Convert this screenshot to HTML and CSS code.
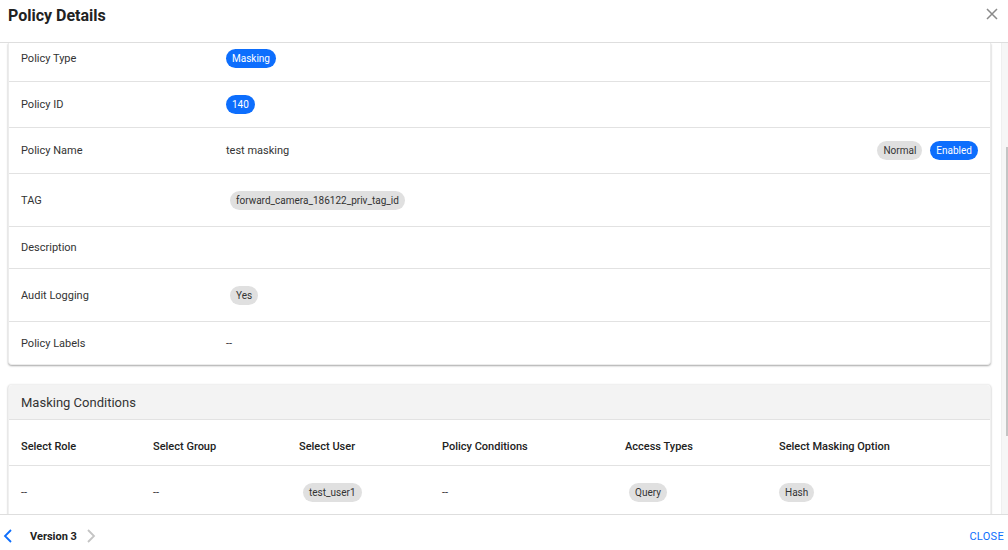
FILE: index.html
```html
<!DOCTYPE html>
<html lang="en">
<head>
    <meta charset="UTF-8">
    <meta name="viewport" content="width=device-width, initial-scale=1.0">
    <title>Policy Details</title>
    <link rel="stylesheet" href="styles.css">
</head>
<body>

    <div class="modal">

        <!-- Header -->
        <div class="modal-header">
            <h1>Policy Details</h1>
            <button class="close-x" aria-label="Close">
                <svg width="12" height="12" viewBox="0 0 12 12">
                    <path d="M1 1 L11 11 M11 1 L1 11" stroke="#8a8a8a" stroke-width="1.5" fill="none"/>
                </svg>
            </button>
        </div>

        <!-- Body (scrolled down to the policy rows) -->
        <div class="modal-main">
            <div class="modal-body">

                <div class="card scrolled">
                    <div class="detail-row first-row">
                        <div class="label">Policy Type</div>
                        <div class="value"><span class="chip blue">Masking</span></div>
                    </div>
                    <div class="detail-row chip-row">
                        <div class="label">Policy ID</div>
                        <div class="value"><span class="chip blue">140</span></div>
                    </div>
                    <div class="detail-row chip-row">
                        <div class="label">Policy Name</div>
                        <div class="value">test masking</div>
                        <div class="extra">
                            <span class="chip gray">Normal</span>
                            <span class="chip blue">Enabled</span>
                        </div>
                    </div>
                    <div class="detail-row tag-row">
                        <div class="label">TAG</div>
                        <div class="value"><span class="chip gray spaced">forward_camera_186122_priv_tag_id</span></div>
                    </div>
                    <div class="detail-row">
                        <div class="label">Description</div>
                        <div class="value"></div>
                    </div>
                    <div class="detail-row tag-row">
                        <div class="label">Audit Logging</div>
                        <div class="value"><span class="chip gray spaced">Yes</span></div>
                    </div>
                    <div class="detail-row last">
                        <div class="label">Policy Labels</div>
                        <div class="value">--</div>
                    </div>
                </div>

                <div class="card conditions">
                    <div class="card-title">Masking Conditions</div>
                    <div class="cond-grid cond-head">
                        <div>Select Role</div>
                        <div>Select Group</div>
                        <div>Select User</div>
                        <div>Policy Conditions</div>
                        <div>Access Types</div>
                        <div>Select Masking Option</div>
                    </div>
                    <div class="cond-grid cond-row">
                        <div>--</div>
                        <div>--</div>
                        <div><span class="chip gray spaced">test_user1</span></div>
                        <div>--</div>
                        <div><span class="chip gray spaced">Query</span></div>
                        <div><span class="chip gray">Hash</span></div>
                    </div>
                </div>

            </div>

            <!-- scrollbar rail -->
            <div class="scroll-rail">
                <div class="scroll-thumb"></div>
            </div>
        </div>

        <!-- Footer -->
        <div class="modal-footer">
            <div class="versions">
                <svg class="chev" width="10" height="14" viewBox="0 0 10 14">
                    <path d="M8 1 L2 7 L8 13" stroke="#0d6efd" stroke-width="1.8" fill="none"/>
                </svg>
                <span class="version-label">Version 3</span>
                <svg class="chev" width="10" height="14" viewBox="0 0 10 14">
                    <path d="M2 1 L8 7 L2 13" stroke="#c4c4c4" stroke-width="1.8" fill="none"/>
                </svg>
            </div>
            <button class="close-btn">Close</button>
        </div>

    </div>

</body>
</html>
```

FILE: styles.css
```css
* {
    margin: 0;
    padding: 0;
    box-sizing: border-box;
}

body {
    font-family: Roboto, 'Liberation Sans', sans-serif;
    background-color: #fff;
    color: #333;
    width: 1008px;
    height: 550px;
    overflow: hidden;
}

.modal {
    display: flex;
    flex-direction: column;
    height: 550px;
}

/* Header */
.modal-header {
    display: flex;
    justify-content: space-between;
    align-items: center;
    height: 43px;
    padding: 0 8px;
    border-bottom: 1px solid #dedede;
    flex-shrink: 0;
}

.modal-header h1 {
    font-size: 16px;
    font-weight: 700;
    color: #222;
    margin-top: -12px;
}

.close-x {
    background: none;
    border: none;
    width: 14px;
    height: 14px;
    margin-top: -12px;
    margin-right: 1px;
    cursor: pointer;
}

/* Body */
.modal-main {
    flex: 1;
    display: flex;
    min-height: 0;
}

.modal-body {
    flex: 1;
    overflow: hidden;
    padding: 0 10px 0 8px;
}

.scroll-rail {
    width: 7px;
    flex-shrink: 0;
    background-color: #f6f6f6;
    border-left: 1px solid #efefef;
    padding-top: 104px;
}

.scroll-thumb {
    width: 3px;
    height: 289px;
    margin-left: 4px;
    background-color: #c4c4c4;
}

.card {
    background-color: #fff;
    border-radius: 4px;
    border: 1px solid #ececec;
    box-shadow: 0 1px 2px rgba(0, 0, 0, 0.35);
    margin-bottom: 19px;
}

.card.scrolled {
    border-top: none;
    border-radius: 0 0 4px 4px;
}

.card-title {
    background-color: #f3f3f3;
    height: 35px;
    display: flex;
    align-items: center;
    padding: 0 12px;
    font-size: 13px;
    color: #333;
    border-bottom: 1px solid #e2e2e2;
    border-radius: 4px 4px 0 0;
}

.detail-row {
    display: grid;
    grid-template-columns: 205px 1fr auto;
    align-items: center;
    min-height: 42px;
    padding: 0 12px;
    border-bottom: 1px solid #e2e2e2;
    font-size: 11px;
}

.detail-row.first-row {
    min-height: 39px;
    padding-bottom: 8px;
}

.detail-row.chip-row {
    min-height: 46px;
}

.detail-row.tag-row {
    min-height: 53px;
}

.detail-row.last {
    border-bottom: none;
    min-height: 42px;
}

.label,
.value {
    color: #333;
}

.extra {
    display: flex;
    gap: 8px;
}

.chip {
    display: inline-flex;
    align-items: center;
    height: 19px;
    padding: 0 6px;
    border-radius: 10px;
    font-size: 10px;
    line-height: 19px;
}

.chip.blue {
    background-color: #0d6efd;
    color: #fff;
}

.chip.gray {
    background-color: #e0e0e0;
    color: #333;
}

.chip.spaced {
    margin-left: 4px;
}

/* Masking conditions */
.conditions {
    border-color: #f0f0f0;
}

.cond-grid {
    display: grid;
    grid-template-columns: 132px 146px 143px 183px 154px 1fr;
    align-items: center;
    padding-left: 12px;
    font-size: 11px;
}

.cond-head {
    height: 46px;
    padding-top: 8px;
    font-weight: 500;
    color: #222;
    border-bottom: 1px solid #e2e2e2;
}

.cond-row {
    height: 52px;
    color: #333;
}

/* Footer */
.modal-footer {
    display: flex;
    justify-content: space-between;
    align-items: center;
    height: 36px;
    border-top: 1px solid #dedede;
    padding: 7px 4px 0 3px;
    flex-shrink: 0;
}

.versions {
    display: flex;
    align-items: center;
}

.version-label {
    font-size: 11px;
    font-weight: 700;
    color: #222;
    margin: 0 9px 0 17px;
}

.close-btn {
    background: none;
    border: none;
    font-family: Roboto, 'Liberation Sans', sans-serif;
    font-size: 11px;
    font-weight: 400;
    letter-spacing: 0.3px;
    text-transform: uppercase;
    color: #0d6efd;
    cursor: pointer;
}
```
